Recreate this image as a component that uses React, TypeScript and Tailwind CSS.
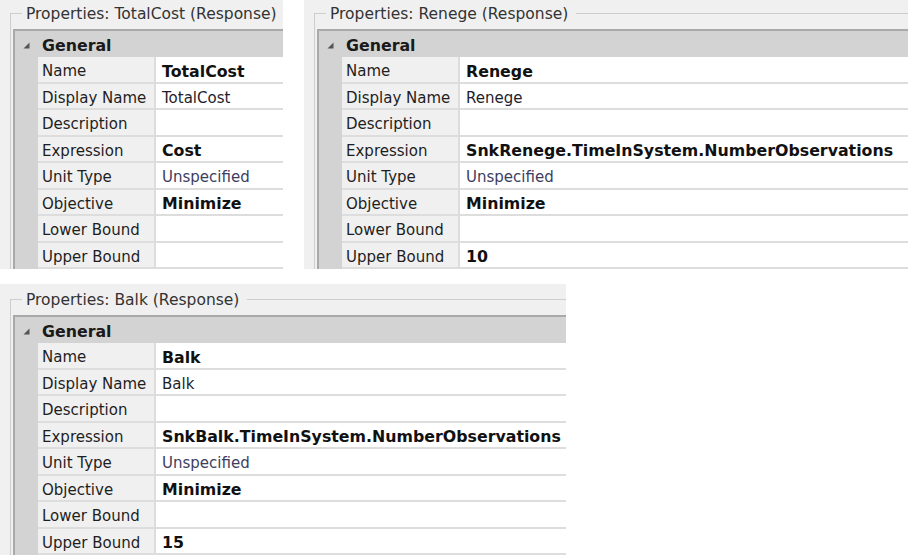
import React from "react";

type Row = { label: string; value?: string; kind?: "bold" | "muted" | "plain" };

function Triangle() {
  return (
    <svg width="7" height="7" viewBox="0 0 7 7" className="block">
      <polygon points="6.5,0.5 6.5,6.5 0.5,6.5" fill="#555555" />
    </svg>
  );
}

function Panel({
  title,
  rows,
  top,
  className,
}: {
  title: string;
  rows: Row[];
  top: "short" | "full";
  className: string;
}) {
  return (
    <div
      className={
        "bg-[#f0f0f0] overflow-hidden font-['DejaVu_Sans',sans-serif] text-[15px] " +
        (top === "short" ? "pt-[4px] " : "pt-[6px] ") +
        className
      }
    >
      <fieldset className="ml-[10px] border-t border-l border-[#cdcdcd] min-w-0">
        <legend className="ml-[11px] pl-[4px] pr-[8px] leading-[18px] text-[15.5px] text-[#333333] whitespace-nowrap">
          <span className="relative top-[1px]">{title}</span>
        </legend>
        <div className="ml-[2px] mt-[7px] border-t-2 border-l-2 border-[#a9a9a9] whitespace-nowrap">
          <div className="h-[26px] bg-[#d3d3d3] flex items-center pl-[8px] pt-[3px]">
            <Triangle />
            <span className="ml-[12px] font-bold text-[15.8px] text-[#1a1a1a]">General</span>
          </div>
          {rows.map((r, i) => (
            <div
              key={r.label}
              className={
                "flex " + (i % 2 === 0 ? "h-[27px]" : "h-[26px]")
              }
            >
              <div className="w-[23px] shrink-0 bg-[#d3d3d3]" />
              <div className="w-[118px] shrink-0 bg-[#f0f0f0] border-r-2 border-b-2 border-[#dddddd] flex items-center pl-[4px] pt-[4px] text-[#1e1e1e]">
                {r.label}
              </div>
              <div
                className={
                  "flex-1 bg-white border-b-2 border-[#dddddd] flex items-center pl-[6px] pt-[4px] " +
                  (r.kind === "bold"
                    ? "font-bold text-[15.8px] text-[#111111]"
                    : r.kind === "muted"
                    ? "text-[#3d3d5e]"
                    : "text-[#1e1e2c]")
                }
              >
                {r.value ?? ""}
              </div>
            </div>
          ))}
        </div>
      </fieldset>
    </div>
  );
}

function rowsFor(name: string, expr: string, upper?: string): Row[] {
  return [
    { label: "Name", value: name, kind: "bold" },
    { label: "Display Name", value: name, kind: "plain" },
    { label: "Description" },
    { label: "Expression", value: expr, kind: "bold" },
    { label: "Unit Type", value: "Unspecified", kind: "muted" },
    { label: "Objective", value: "Minimize", kind: "bold" },
    { label: "Lower Bound" },
    { label: "Upper Bound", value: upper, kind: "bold" },
  ];
}

export default function App() {
  return (
    <div className="w-[908px] h-[555px] bg-white overflow-hidden flex flex-col">
      <div className="flex h-[269px] gap-[21px] shrink-0">
        <Panel
          title="Properties: TotalCost (Response)"
          rows={rowsFor("TotalCost", "Cost")}
          top="short"
          className="w-[283px] shrink-0 h-[269px]"
        />
        <Panel
          title="Properties: Renege (Response)"
          rows={rowsFor("Renege", "SnkRenege.TimeInSystem.NumberObservations", "10")}
          top="short"
          className="flex-1 h-[269px]"
        />
      </div>
      <Panel
        title="Properties: Balk (Response)"
        rows={rowsFor("Balk", "SnkBalk.TimeInSystem.NumberObservations", "15")}
        top="full"
        className="mt-[15px] w-[566px] h-[271px] shrink-0"
      />
    </div>
  );
}
